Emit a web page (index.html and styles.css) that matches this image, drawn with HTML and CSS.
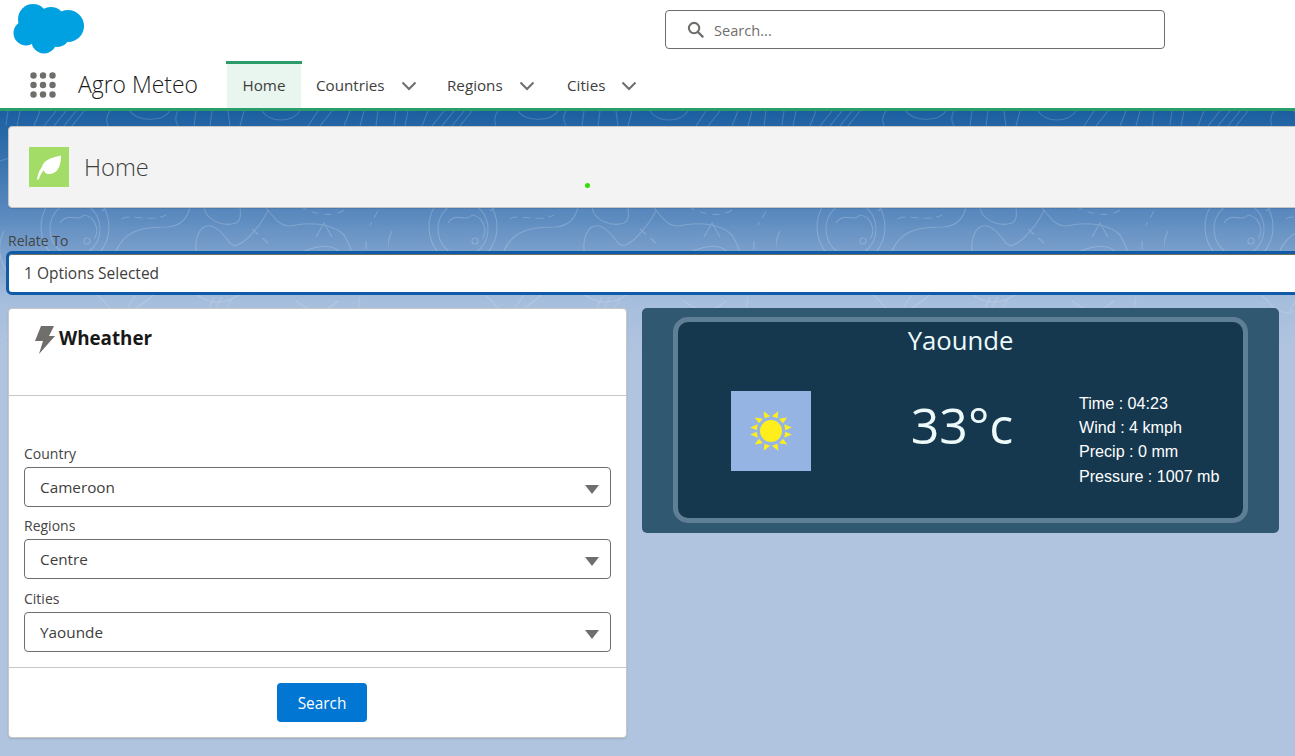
FILE: index.html
```html
<!DOCTYPE html>
<html lang="en">
<head>
<meta charset="utf-8">
<title>Agro Meteo</title>
<link rel="stylesheet" href="styles.css">
</head>
<body>
<header class="site-header">
  <div class="top-row">
    <svg class="logo" viewBox="0 0 72 50" aria-label="Salesforce"><g fill="#00a1e0"><circle cx="20" cy="15" r="15"/><circle cx="38" cy="17" r="14"/><circle cx="55" cy="22" r="16"/><circle cx="13" cy="29" r="12.5"/><circle cx="31" cy="37" r="12.5"/><circle cx="44" cy="30" r="13"/><rect x="14" y="15" width="40" height="22"/></g></svg>
    <div class="global-search">
      <svg class="search-icon" viewBox="0 0 18 18"><circle cx="7.5" cy="7.5" r="5.5" fill="none" stroke="#706e6b" stroke-width="2.2"/><path d="M11.6 11.6 L16.5 16.5" stroke="#706e6b" stroke-width="2.4" stroke-linecap="round"/></svg>
      <span class="search-placeholder">Search...</span>
    </div>
  </div>
  <nav class="nav-row">
    <svg class="waffle" viewBox="0 0 26 26"><g fill="#706e6b"><circle cx="3.5" cy="3.5" r="3.2"/><circle cx="13" cy="3.5" r="3.2"/><circle cx="22.5" cy="3.5" r="3.2"/><circle cx="3.5" cy="13" r="3.2"/><circle cx="13" cy="13" r="3.2"/><circle cx="22.5" cy="13" r="3.2"/><circle cx="3.5" cy="22.5" r="3.2"/><circle cx="13" cy="22.5" r="3.2"/><circle cx="22.5" cy="22.5" r="3.2"/></g></svg>
    <span class="app-name">Agro Meteo</span>
    <a class="tab tab-active">Home</a>
    <a class="tab">Countries<svg class="chev" viewBox="0 0 16 10"><path d="M1.5 1.5 L8 8 L14.5 1.5" fill="none" stroke="#706e6b" stroke-width="2"/></svg></a>
    <a class="tab tab-regions">Regions<svg class="chev" viewBox="0 0 16 10"><path d="M1.5 1.5 L8 8 L14.5 1.5" fill="none" stroke="#706e6b" stroke-width="2"/></svg></a>
    <a class="tab tab-cities">Cities<svg class="chev" viewBox="0 0 16 10"><path d="M1.5 1.5 L8 8 L14.5 1.5" fill="none" stroke="#706e6b" stroke-width="2"/></svg></a>
  </nav>
</header>

<main class="page">
  <svg class="topo" width="1295" height="270" aria-hidden="true">
    <defs>
      <pattern id="topo-tile" width="388" height="270" patternUnits="userSpaceOnUse" x="0" y="0">
        <g fill="none" stroke="#fff" stroke-width="1.1">
          <ellipse cx="75" cy="116" rx="34" ry="37" stroke-dasharray="70 10"/>
          <ellipse cx="75" cy="118" rx="25" ry="27"/>
          <path d="M60 112 C68 100 78 112 84 104 C96 106 100 120 94 128"/>
          <circle cx="87" cy="130" r="3"/>
          <path d="M102 100 L112 92"/>
          <path d="M122 108 C128 102 150 112 166 104" stroke-dasharray="8 5"/>
          <path d="M116 140 C126 116 150 116 168 116 C190 114 196 90 186 70 C178 58 170 50 160 48"/>
          <path d="M196 140 C194 122 206 98 230 132 C238 142 258 118 268 100 M204 96 C206 110 224 116 236 112 C244 108 240 90 234 84"/>
          <path d="M252 118 L268 132" stroke-dasharray="8 6"/>
          <path d="M264 94 C276 110 282 118 296 114 C320 110 336 116 344 124 C350 134 356 150 358 168 M278 156 C300 138 330 128 340 142"/>
          <path d="M316 126 L324 112 L332 126"/>
          <path d="M378 100 L370 114 M366 130 L366 150" stroke-dasharray="8 5"/>
          <path d="M300 95 C320 108 345 105 350 92" stroke-dasharray="7 6"/>
          <path d="M4 120 C-2 132 -2 146 6 160 M30 160 C46 172 80 166 104 190 C120 214 140 196 158 180"/>
          <path d="M126 200 C140 170 166 162 188 178 C206 192 222 198 244 180"/>
          <path d="M0 50 C18 44 46 40 60 22 M20 72 C40 64 60 46 72 34"/>
          <path d="M8 0 L6 14 M20 0 L17 15 M40 0 L34 15 M56 0 L44 15 M66 0 L54 15 M76 0 L64 15 M84 0 L72 15 M110 0 C106 5 106 10 108 15 M130 0 C136 10 162 12 170 0"/>
          <path d="M178 0 C175 5 175 10 178 15 M196 0 L194 15 M212 0 L210 15 M228 0 L230 15 M244 0 L240 15 M262 0 C270 12 292 12 300 0 M318 0 L308 15 M332 0 L320 15 M350 0 L344 15 M364 0 L360 15 M378 0 L376 15"/>
          <path d="M18 70 C30 56 48 58 54 80 M110 60 C130 44 156 32 176 40 M214 36 C238 16 280 26 290 52 M346 40 C360 28 376 30 388 40"/>
          <path d="M0 230 C30 206 70 200 100 226 M140 232 C170 206 212 206 238 232 M270 228 C300 204 342 206 388 230"/>
          <path d="M214 186 L206 204 M222 186 L212 206 M232 188 L220 208 M296 190 C310 202 326 202 338 190 M360 186 L356 210"/>
        </g>
      </pattern>
      <linearGradient id="topo-fade" x1="0" y1="0" x2="0" y2="1">
        <stop offset="0" stop-color="#fff" stop-opacity="0.17"/>
        <stop offset="0.62" stop-color="#fff" stop-opacity="0.2"/>
        <stop offset="1" stop-color="#fff" stop-opacity="0"/>
      </linearGradient>
      <mask id="topo-mask"><rect width="1295" height="270" fill="url(#topo-fade)"/></mask>
    </defs>
    <rect width="1295" height="270" fill="url(#topo-tile)" mask="url(#topo-mask)"/>
  </svg>

  <section class="page-head">
    <span class="leaf-box"><svg viewBox="0 0 40 40"><path d="M8 32 C9 26 11 22 13 20 C14 13 24 10 32 8.500 C32 17 30 26 21 27 C18 27.500 15 26 15 23 C12 26 11 29 10 32 C9.500 33 8 33 8 32 Z" fill="#fff"/></svg></span>
    <h1 class="page-title">Home</h1>
    <i class="status-dot"></i>
  </section>

  <section class="relate">
    <div class="relate-label">Relate To</div>
    <div class="relate-input">1 Options Selected</div>
  </section>

  <section class="columns">
    <article class="card">
      <div class="card-head">
        <svg class="bolt" viewBox="0 0 20 28"><path d="M6 0 H19 L14 10 H20 L4 28 L8 15 H0 Z" fill="#706e6b"/></svg>
        <h2 class="card-title">Wheather</h2>
      </div>
      <div class="card-body">
        <label class="field-label">Country</label>
        <div class="select">Cameroon<i class="caret"></i></div>
        <label class="field-label">Regions</label>
        <div class="select">Centre<i class="caret"></i></div>
        <label class="field-label field-label-last">Cities</label>
        <div class="select">Yaounde<i class="caret"></i></div>
      </div>
      <div class="card-foot"><button class="btn">Search</button></div>
    </article>

    <article class="weather">
      <div class="weather-inner">
        <div class="city">Yaounde</div>
        <div class="weather-row">
          <div class="icon-cell">
            <span class="sun-box">
              <svg viewBox="0 0 80 80"><defs><path id="ray" d="M-2 -21 L3 -14.500 L-3 -14 Z" fill="#ffee1c"/></defs><circle cx="40" cy="40" r="11" fill="#ffee1c"/><g transform="translate(40 40)"><use href="#ray" transform="rotate(-15)"/><use href="#ray" transform="rotate(15) scale(-1 1)"/><use href="#ray" transform="rotate(45) scale(-1 1)"/><use href="#ray" transform="rotate(75) scale(-1 1)"/><use href="#ray" transform="rotate(105)"/><use href="#ray" transform="rotate(135)"/><use href="#ray" transform="rotate(165)"/><use href="#ray" transform="rotate(195) scale(-1 1)"/><use href="#ray" transform="rotate(225) scale(-1 1)"/><use href="#ray" transform="rotate(255) scale(-1 1)"/><use href="#ray" transform="rotate(285)"/><use href="#ray" transform="rotate(315)"/></g></svg>
            </span>
          </div>
          <div class="temp">33°c</div>
          <div class="details">
            <div>Time : 04:23</div>
            <div>Wind : 4 kmph</div>
            <div>Precip : 0 mm</div>
            <div>Pressure : 1007 mb</div>
          </div>
        </div>
      </div>
    </article>
  </section>
</main>
</body>
</html>
```

FILE: styles.css
```css
* { box-sizing: border-box; }
html, body { margin: 0; height: 100%; }
body {
  width: 1295px;
  height: 756px;
  overflow: hidden;
  font-family: "Open Sans", "Noto Sans", sans-serif;
  color: #2b2826;
  background: #b0c4df;
}
.site-header {
  height: 111px;
  background: #fff;
  border-bottom: 3px solid #2a9d6a;
}
.top-row {
  height: 61px;
  display: flex;
  align-items: flex-start;
  padding: 4px 0 0 13px;
}
.logo { width: 72px; height: 50px; flex: none; }
.global-search {
  margin: 6px 0 0 580px;
  width: 500px;
  height: 39px;
  border: 1px solid #706e6b;
  border-radius: 4px;
  display: flex;
  align-items: center;
  padding-left: 21px;
  background: #fff;
}
.search-icon { width: 17px; height: 17px; margin-right: 10px; }
.search-placeholder { font-size: 14.6px; color: #706e6b; padding-top: 1px; }
.nav-row { height: 47px; display: flex; align-items: center; padding-left: 30px; }
.waffle { width: 26px; height: 26px; flex: none; }
.app-name { font-size: 22.9px; font-weight: 300; color: #181818; margin: 0 29px 0 22px; width: 120px; white-space: nowrap; }
.tab {
  display: flex;
  align-items: center;
  height: 47px;
  font-size: 15.2px;
  color: #3e3e3c;
  padding: 0 0 0 15px;
  width: 131px;
  white-space: nowrap;
}
.tab-regions { width: 120px; }
.tab-cities { width: 100px; }
.tab-active {
  position: relative;
  width: 74px;
  padding: 0;
  justify-content: center;
  background: #e9f5ef;
}
.tab-active::before {
  content: "";
  position: absolute;
  left: -1px;
  right: -1px;
  top: 0;
  height: 3px;
  background: #2a9d6a;
}
.chev { width: 16px; height: 10px; margin-left: 16px; margin-top: 2px; flex: none; }

.page {
  position: relative;
  height: 645px;
  padding: 15px 0 0 8px;
  background: linear-gradient(180deg, #1b5fa1 0, #5b8abf 105px, #a6bedd 190px, #b0c4df 240px);
}
.topo { position: absolute; left: 0; top: 0; }
.page-head, .relate, .columns { position: relative; }
.page-head {
  height: 82px;
  margin-right: -12px;
  background: #f3f3f3;
  border: 1px solid #c9c7c5;
  border-radius: 4px;
  display: flex;
  align-items: center;
  padding-left: 20px;
  box-shadow: 0 1px 1px rgba(0,0,0,.1);
}
.leaf-box { width: 40px; height: 40px; background: #a3dc66; display: block; flex: none; }
.leaf-box svg { display: block; width: 40px; height: 40px; }
.page-title { font-size: 23.7px; font-weight: 300; color: #3e3e3c; margin: 0 0 0 15px; }
.status-dot {
  position: absolute;
  left: 576px;
  top: 56px;
  width: 5px;
  height: 5px;
  border-radius: 50%;
  background: #2fe000;
}
.relate { margin-top: 23px; }
.relate-label { font-size: 14px; line-height: 20px; color: #444; }
.relate-input {
  height: 44px;
  margin: 0 -12px 0 -2px;
  border: 3px solid #0f5ba7;
  border-radius: 6px;
  background: #fff;
  font-size: 15.5px;
  line-height: 38px;
  padding-left: 15px;
  color: #3e3e3c;
  box-shadow: inset 0 1px 0 #706e6b;
}
.columns { display: flex; align-items: flex-start; gap: 15px; margin-top: 13px; }
.card {
  width: 619px;
  height: 430px;
  background: #fff;
  border: 1px solid #c9c7c5;
  border-radius: 4px;
  box-shadow: 0 1px 2px rgba(0,0,0,.12);
  flex: none;
}
.card-head { height: 87px; border-bottom: 1px solid #c9c7c5; display: flex; align-items: flex-start; padding: 17px 0 0 26px; }
.bolt { width: 20px; height: 28px; flex: none; }
.card-title { font-size: 18.8px; line-height: 26px; font-weight: 700; color: #181818; margin: -1px 0 0 4px; }
.card-body { padding: 48px 15px 0; height: 272px; border-bottom: 1px solid #c9c7c5; }
.field-label { display: block; font-size: 14px; line-height: 20px; color: #444; margin-bottom: 3px; }
.field-label-last { margin-top: 10px; }
.select {
  position: relative;
  height: 40px;
  border: 1px solid #706e6b;
  border-radius: 4px;
  font-size: 15.3px;
  line-height: 39px;
  padding-left: 15px;
  color: #3e3e3c;
  margin-bottom: 9px;
  background: #fff;
}
.select:last-child { margin-bottom: 0; }
.caret {
  position: absolute;
  right: 11px;
  top: 17px;
  border-left: 7px solid transparent;
  border-right: 7px solid transparent;
  border-top: 9px solid #706e6b;
}
.card-foot { display: flex; justify-content: center; padding: 15px 0 0 9px; }
.btn {
  width: 90px;
  height: 39px;
  border: 0;
  border-radius: 4px;
  background: #0176d3;
  color: #fff;
  padding: 2px 0 0;
  font: 400 15.4px "Open Sans", sans-serif;
}
.weather {
  width: 637px;
  height: 225px;
  background: #305971;
  border-radius: 5px;
  padding: 9px 31px 10px;
  flex: none;
}
.weather-inner {
  height: 206px;
  border: 5px solid #5f7f96;
  border-radius: 15px;
  background: #15384f;
  color: #eefafa;
}
.city { text-align: center; font-size: 25.7px; line-height: 36px; padding-top: 1px; height: 36px; }
.weather-row { display: grid; grid-template-columns: 200px 166px 1fr; align-items: start; margin-top: 33px; }
.icon-cell { padding-left: 53px; }
.sun-box { display: block; width: 80px; height: 80px; background: #96b4e3; }
.sun-box svg { display: block; width: 80px; height: 80px; }
.temp { text-align: center; font-size: 50px; line-height: 60px; margin-top: 4px; padding-left: 2px; }
.details { font-family: "Liberation Sans", Arial, sans-serif; font-size: 16.1px; line-height: 24.2px; color: #fff; white-space: nowrap; padding-left: 35px; }
```
